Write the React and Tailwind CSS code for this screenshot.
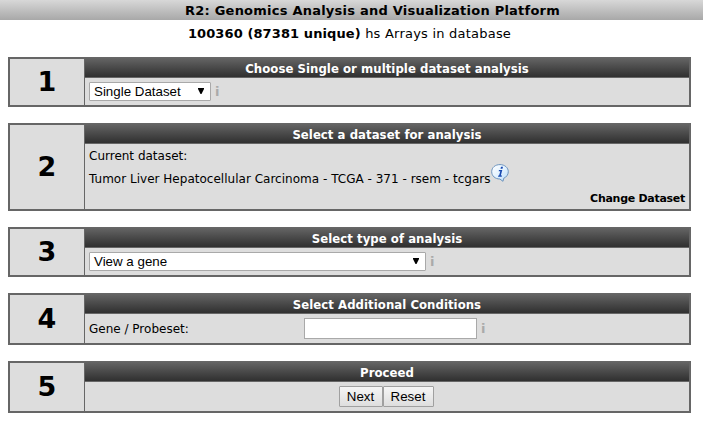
import React from 'react';

function Step({ number, title, height, children }) {
  return (
    <section className={`${height} flex shrink-0 border-2 border-[#666] bg-[#ddd]`}>
      <div className="flex w-[75px] shrink-0 items-center justify-center border-r border-[#666] text-[27px] leading-none font-bold">
        <span className="-mt-px">{number}</span>
      </div>
      <div className="flex grow flex-col">
        <h2 className="-mt-0.5 flex h-[21px] shrink-0 items-center justify-center border-b border-[#666] bg-linear-to-b from-[#686868] to-[#303030] pt-[3px] font-['DejaVu_Sans_Condensed','DejaVu_Sans',sans-serif] text-[13px] leading-none font-bold tracking-[0.05px] text-white">
          {title}
        </h2>
        {children}
      </div>
    </section>
  );
}

function Hint() {
  return <span className="ml-1 text-[13px] leading-none font-bold text-[#aaa]">i</span>;
}

function SelectBox({ width, children }) {
  return (
    <button className={`${width} flex h-[19px] items-center justify-between rounded-[1px] border border-[#a9a9a9] bg-white pr-[6px] pl-1 font-['Liberation_Sans',Arial,sans-serif] text-[13.33px] leading-none`}>
      {children}
      <svg className="-mt-px h-[6px] w-[6px]" viewBox="0 0 6 6"><path d="M0 0h6v1L3.500 6h-1L0 1Z" /></svg>
    </button>
  );
}

function InfoIcon() {
  return (
    <svg className="mb-3 h-[18px] w-[18px]" viewBox="0 0 18 18">
      <defs>
        <linearGradient id="bubble" x1="0" y1="0" x2="1" y2="1">
          <stop offset="0" stopColor="#fff" />
          <stop offset="0.5" stopColor="#e3f2ff" />
          <stop offset="1" stopColor="#b5d9f7" />
        </linearGradient>
      </defs>
      <path d="M9 .6c4.700 0 8.300 3.100 8.300 7.100 0 3-2 5.500-4.600 6.600l-.7 3-3.200-2.300C4.200 15 .7 12 .7 7.700S4.300.6 9 .6Z" fill="url(#bubble)" stroke="#6c93bd" />
      <path d="M10 2.800h2l-.5 2H9.500ZM8 6h3.300L9.800 11.500h1.200l-.3 1.200H7l.3-1.200h.8l1.200-4.300H7.700Z" fill="#1748b0" />
    </svg>
  );
}

export default function App() {
  return (
    <div className="flex h-[424px] w-[703px] flex-col overflow-hidden bg-white font-['DejaVu_Sans',Verdana,sans-serif] text-[12px] text-black">
      <header className="flex h-5 shrink-0 items-center justify-center bg-linear-to-b from-[#d8d8d8] to-[#a8a8a8] pl-[42px] text-[13px] leading-none font-bold tracking-[0.23px]">
        R2: Genomics Analysis and Visualization Platform
      </header>
      <p className="flex h-[37px] shrink-0 justify-center pt-[7px] pr-1 text-[13px] leading-[14px] whitespace-pre">
        <b className="tracking-[0.1px]">100360 (87381 unique)</b><span className="tracking-[0.22px]"> hs Arrays in database</span>
      </p>
      <main className="ml-2 flex w-[683px] flex-col gap-4">
        <Step number="1" height="h-[50px]" title="Choose Single or multiple dataset analysis">
          <div className="flex grow items-center pl-1">
            <SelectBox width="w-[122px]">Single Dataset</SelectBox>
            <Hint />
          </div>
        </Step>
        <Step number="2" height="h-[88px]" title="Select a dataset for analysis">
          <div className="flex grow flex-col px-1 pt-1">
            <div className="leading-4">Current dataset:</div>
            <div className="flex h-[28px] items-center pt-px">
              <span className="tracking-[0.015px]">Tumor Liver Hepatocellular Carcinoma - TCGA - 371 - rsem - tcgars</span>
              <InfoIcon />
            </div>
            <div className="self-end text-[11px] leading-[14px] font-bold tracking-[-0.28px]">Change Dataset</div>
          </div>
        </Step>
        <Step number="3" height="h-[50px]" title="Select type of analysis">
          <div className="flex grow items-center pl-1">
            <SelectBox width="w-[337px]">View a gene</SelectBox>
            <Hint />
          </div>
        </Step>
        <Step number="4" height="h-[52px]" title="Select Additional Conditions">
          <div className="flex grow items-center pl-1">
            <label htmlFor="gene" className="w-[215px]">Gene / Probeset:</label>
            <input id="gene" className="h-[21px] w-[173px] border border-[#a9a9a9] bg-white" />
            <Hint />
          </div>
        </Step>
        <Step number="5" height="h-[52px]" title="Proceed">
          <div className="flex grow items-center justify-center pr-0.5 font-['Liberation_Sans',Arial,sans-serif] text-[13.33px] leading-none">
            <button className="h-[21px] w-11 rounded-[1px] border border-[#a0a0a0] bg-linear-to-b from-[#f6f6f6] to-[#dedede]">Next</button>
            <button className="h-[21px] w-[51px] rounded-[1px] border border-[#a0a0a0] bg-linear-to-b from-[#f6f6f6] to-[#dedede]">Reset</button>
          </div>
        </Step>
      </main>
    </div>
  );
}
